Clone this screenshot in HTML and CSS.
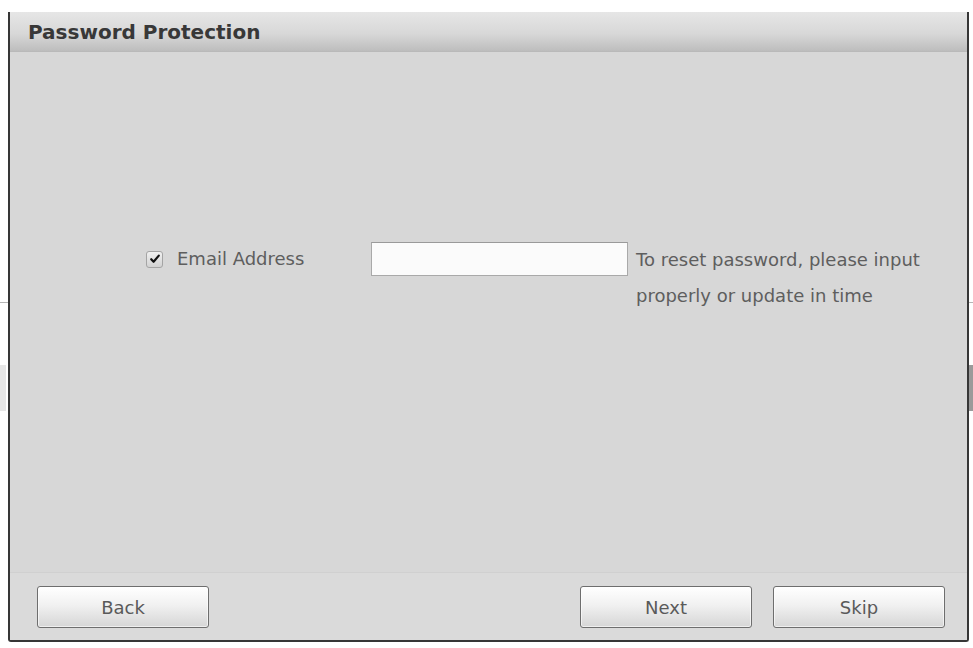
FILE: index.html
```html
<!DOCTYPE html>
<html lang="en">
<head>
<meta charset="utf-8">
<title>Password Protection</title>
<link rel="stylesheet" href="styles.css">
</head>
<body>
<div class="bg-mark bg-left-line"></div>
<div class="bg-mark bg-left-block"></div>
<div class="bg-mark bg-right-line"></div>
<div class="bg-mark bg-right-block"></div>
<div class="dialog">
  <div class="dialog-header">
    <h1 class="dialog-title">Password Protection</h1>
  </div>
  <div class="dialog-body">
    <div class="field-row">
      <label class="check-label">
        <span class="checkbox">
          <svg viewBox="0 0 12 12" width="12" height="12" aria-hidden="true"><path d="M2.2 6.2 L4.6 8.8 L9.8 2.6" fill="none" stroke="#111" stroke-width="2.2" stroke-linecap="round" stroke-linejoin="round"/></svg>
        </span>
        <span class="label-text">Email Address</span>
      </label>
      <input class="text-input" type="text" value="">
      <p class="hint">To reset password, please input<br>properly or update in time</p>
    </div>
  </div>
  <div class="dialog-footer">
    <button class="btn">Back</button>
    <div class="footer-right">
      <button class="btn">Next</button>
      <button class="btn">Skip</button>
    </div>
  </div>
</div>
</body>
</html>
```
FILE: styles.css
```css
html, body {
  margin: 0;
  padding: 0;
  background: #ffffff;
}
body {
  width: 973px;
  height: 648px;
  overflow: hidden;
  position: relative;
  font-family: "DejaVu Sans", "Liberation Sans", Arial, sans-serif;
  color: #5e5e5e;
}
.bg-mark {
  position: absolute;
  background: #b5b5b5;
}
.bg-left-line { left: 0; top: 302px; width: 8px; height: 1px; }
.bg-left-block { left: 0; top: 365px; width: 6px; height: 46px; background: #e6e6e6; }
.bg-right-line { left: 969px; top: 302px; width: 4px; height: 1px; }
.bg-right-block { left: 969px; top: 365px; width: 4px; height: 46px; background: #9a9a9a; }

.dialog {
  position: relative;
  margin: 12px 0 0 8px;
  width: 957px;
  height: 628px;
  border-left: 2px solid #363636;
  border-right: 2px solid #363636;
  border-bottom: 2px solid #363636;
  border-radius: 0 0 3px 3px;
  background: #d7d7d7;
  display: flex;
  flex-direction: column;
}
.dialog-header {
  height: 39px;
  border-bottom: 1px solid #b9b9b9;
  background: linear-gradient(to bottom, #e6e6e6 0%, #d8d8d8 55%, #bdbdbd 100%);
  display: flex;
  align-items: center;
  padding-left: 18px;
}
.dialog-title {
  margin: 0;
  font-size: 20px;
  font-weight: bold;
  color: #383838;
  line-height: 24px;
  padding-top: 1px;
}
.dialog-body {
  flex: 1;
  padding-top: 190px;
  padding-left: 136px;
}
.field-row {
  display: flex;
  align-items: flex-start;
}
.check-label {
  display: flex;
  align-items: center;
  height: 34px;
  width: 225px;
}
.checkbox {
  width: 15px;
  height: 15px;
  border: 1px solid #a4a4a4;
  border-radius: 3px;
  background: linear-gradient(to bottom, #f0f0f0, #d2d2d2);
  display: flex;
  align-items: center;
  justify-content: center;
  margin-right: 14px;
}
.label-text {
  font-size: 18px;
  line-height: 34px;
  color: #5e5e5e;
}
.text-input {
  box-sizing: border-box;
  width: 257px;
  height: 34px;
  margin: 0;
  border: 1px solid #a9a9a9;
  border-top-color: #9a9a9a;
  background: #fbfbfb;
  font-family: inherit;
  font-size: 16px;
  padding: 0 6px;
  outline: none;
}
.hint {
  margin: 0 0 0 8px;
  font-size: 18px;
  line-height: 36px;
  color: #5e5e5e;
}
.dialog-footer {
  height: 68px;
  box-sizing: border-box;
  border-top: 1px solid #d0d0d0;
  background: #dadada;
  display: flex;
  justify-content: space-between;
  align-items: flex-start;
  padding: 13px 22px 0 27px;
}
.footer-right {
  display: flex;
  gap: 21px;
}
.btn {
  box-sizing: border-box;
  width: 172px;
  height: 42px;
  margin: 0;
  border: 1px solid #6e6e6e;
  border-radius: 3px;
  background: linear-gradient(to bottom, #ffffff 0%, #f1f1f1 45%, #d6d6d6 100%);
  box-shadow: inset 0 0 0 1px rgba(255,255,255,0.6);
  font-family: "DejaVu Sans", "Liberation Sans", Arial, sans-serif;
  font-size: 18px;
  color: #5a5a5a;
  cursor: pointer;
  padding: 0;
}
```
